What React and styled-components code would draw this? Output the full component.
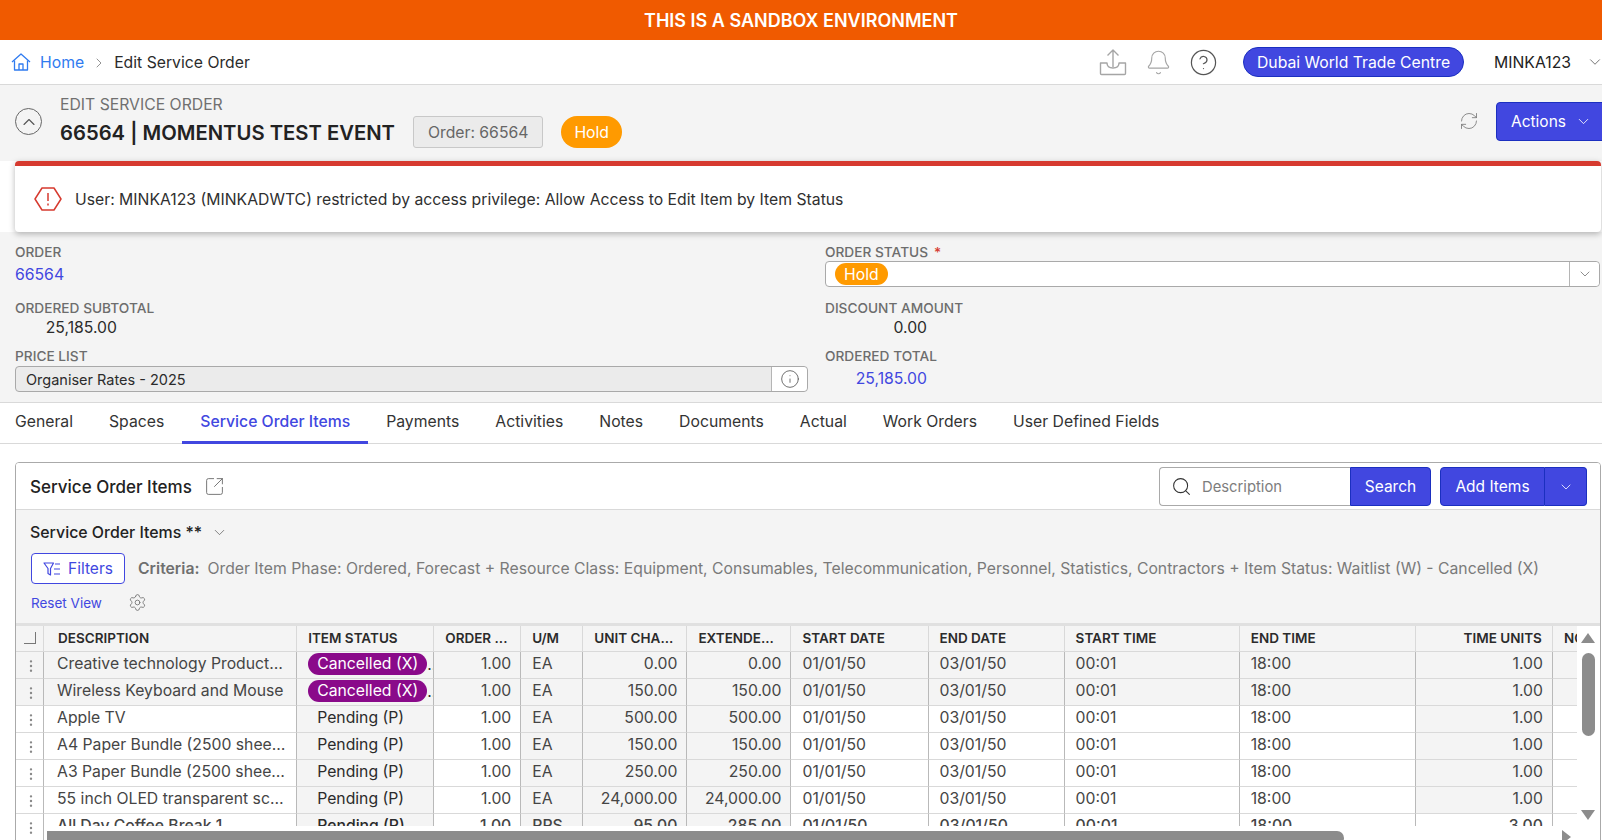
import styled, { createGlobalStyle } from "styled-components";
import {
    Bell,
    ChevronDown,
    ChevronRight,
    ChevronUp,
    CircleHelp,
    EllipsisVertical,
    Info,
    RefreshCw,
    Search,
    Settings,
    SquareArrowOutUpRight,
} from "lucide-react";

const BLUE = "#4147e0";
const BLUE_EDGE = "#1b2fc0";
const GREY_BG = "#f4f4f4";
const LINE = "#d9d9d9";
const BODY_FONT = "15.75px";

const GlobalStyle = createGlobalStyle`
    html, body {
        margin: 0;
        padding: 0;
        height: 840px;
        overflow: hidden;
        background: white;
    }
    body, input, button {
        font-family: Inter, "Liberation Sans", sans-serif;
        color: #2b2b2b;
    }
    * { box-sizing: border-box; }
`;

const Page = styled.div`
    width: 1602px;
    height: 840px;
    overflow: hidden;
`;

const Banner = styled.div`
    height: 40px;
    background: #f05a00;
    color: white;
    font-size: 18px;
    font-weight: 600;
    display: flex;
    align-items: center;
    justify-content: center;
`;

const TopBar = styled.header`
    height: 45px;
    background: white;
    border-bottom: 1px solid ${LINE};
    padding: 0 0 0 11px;
    display: flex;
    align-items: center;
    justify-content: space-between;
`;

const Crumbs = styled.nav`
    display: flex;
    align-items: center;
    font-size: ${BODY_FONT};
    color: #2b2b2b;
`;

const CrumbLink = styled.a`
    color: #2f7bf0;
    margin-left: 9px;
`;

const CrumbArrow = styled(ChevronRight)`
    margin: 1px 7px 0 7px;
    color: #777;
`;

const TopTools = styled.div`
    display: flex;
    align-items: center;
    margin-right: -2px;
`;

const ToolIcon = styled.span`
    display: flex;
    color: ${(p) => p.$color || "#a5a5a5"};
    margin-right: ${(p) => p.$gap}px;
`;

const VenuePill = styled.div`
    width: 221px;
    height: 30px;
    border-radius: 15px;
    background: ${BLUE};
    border: 1px solid ${BLUE_EDGE};
    color: white;
    font-size: ${BODY_FONT};
    display: flex;
    align-items: center;
    justify-content: center;
    margin-right: 30px;
`;

const UserName = styled.span`
    font-size: ${BODY_FONT};
    color: #222;
    margin-right: 15px;
`;

const PageHead = styled.section`
    height: 76px;
    background: ${GREY_BG};
    padding: 10px 0 0 15px;
    display: flex;
    justify-content: space-between;
`;

const HeadLeft = styled.div`
    display: flex;
    align-items: center;
    align-self: flex-start;
    gap: 18px;
`;

const CollapseBtn = styled.span`
    width: 27px;
    height: 27px;
    border: 1.3px solid #666;
    border-radius: 50%;
    color: #555;
    display: flex;
    align-items: center;
    justify-content: center;
`;

const HeadEyebrow = styled.div`
    font-size: ${BODY_FONT};
    line-height: 19px;
    color: #707070;
`;

const TitleRow = styled.div`
    display: flex;
    align-items: center;
    margin-top: 2px;
`;

const Title = styled.h1`
    margin: 0;
    font-size: 20.25px;
    font-weight: 600;
    color: #222;
    margin-right: 18px;
`;

const OrderChip = styled.span`
    height: 32px;
    padding: 0 14px;
    background: #ebebeb;
    border: 1px solid #c8c8c8;
    border-radius: 3px;
    color: #666;
    font-size: ${BODY_FONT};
    display: flex;
    align-items: center;
    margin-right: 18px;
`;

const HoldBadge = styled.span`
    background: #ff9a00;
    color: white;
    border-radius: 16px;
    display: inline-flex;
    align-items: center;
    justify-content: center;
    font-size: ${BODY_FONT};
    height: ${(p) => (p.$small ? "22px" : "32px")};
    padding: 0 ${(p) => (p.$small ? "9px" : "13px")};
`;

const HeadRight = styled.div`
    display: flex;
    align-items: flex-start;
    margin-right: -16px;
    padding-top: 7px;
`;

const RefreshIcon = styled(RefreshCw)`
    color: #777;
    margin: 9px 17px 0 0;
`;

const BlueButton = styled.button`
    height: ${(p) => p.$h || 39}px;
    background: ${BLUE};
    border: 1px solid ${BLUE_EDGE};
    border-radius: 4px;
    color: white;
    font-size: 15.5px;
    display: flex;
    align-items: center;
    padding: 0 14px;
`;

const ActionsButton = styled(BlueButton)`
    width: 122px;
    gap: 9px;
    padding-right: 0;
`;

const AlertBox = styled.div`
    position: relative;
    margin: 0 1px 0 15px;
    height: 71px;
    background: white;
    border-top: 5px solid #d63a2f;
    border-radius: 4px;
    box-shadow: 0 2px 6px rgba(0, 0, 0, 0.28);
    padding-left: 19px;
    display: flex;
    align-items: center;
    gap: 13px;
    font-size: ${BODY_FONT};
    color: #2f2f2f;
`;

const FieldGrid = styled.section`
    background: ${GREY_BG};
    height: 171px;
    padding: 12px 2px 0 15px;
    border-bottom: 1px solid ${LINE};
    display: grid;
    grid-template-columns: 793px 775px;
    column-gap: 17px;
    grid-template-rows: 56px 48px 44px;
`;

const Field = styled.div`
    display: flex;
    flex-direction: column;
    min-width: 0;
`;

const FieldLabel = styled.label`
    font-size: 13.7px;
    line-height: 16px;
    font-weight: 500;
    color: #6d6d6d;
    margin-bottom: 1px;
`;

const Required = styled.span`
    color: #d63a2f;
    margin-left: 6px;
`;

const LinkValue = styled.a`
    font-size: ${BODY_FONT};
    line-height: 28px;
    color: ${BLUE};
`;

const AmountValue = styled.div`
    width: 102px;
    text-align: right;
    font-size: ${BODY_FONT};
    line-height: 22px;
    color: ${(p) => (p.$link ? BLUE : "#2b2b2b")};
    margin-top: ${(p) => (p.$link ? "3px" : "0")};
`;

const SelectBox = styled.div`
    height: 26px;
    border: 1px solid #a9a9a9;
    border-radius: 4px;
    background: ${(p) => (p.$disabled ? "#ebebeb" : "white")};
    margin-top: ${(p) => (p.$disabled ? "1px" : "0")};
    display: flex;
    align-items: center;
    font-size: 14.5px;
`;

const SelectValue = styled.div`
    flex: 1;
    padding-left: ${(p) => p.$pad}px;
    display: flex;
    align-items: center;
`;

const SelectAddon = styled.span`
    width: ${(p) => p.$w}px;
    height: 100%;
    border-left: 1px solid #b5b5b5;
    background: white;
    border-radius: 0 4px 4px 0;
    color: #555;
    display: flex;
    align-items: center;
    justify-content: center;
`;

const Tabs = styled.nav`
    height: 41px;
    background: white;
    border-bottom: 1px solid ${LINE};
    padding-left: 15px;
    display: flex;
`;

const Tab = styled.a`
    padding: 0 18px 2px;
    font-size: ${BODY_FONT};
    display: flex;
    align-items: center;
    color: ${(p) => (p.$active ? BLUE : "#333")};
    font-weight: ${(p) => (p.$active ? 500 : 400)};
    border-bottom: 3px solid ${(p) => (p.$active ? BLUE : "transparent")};
    height: 41px;

    &:first-child {
        padding-left: 0;
    }
`;

const Panel = styled.section`
    margin: 18px 1px 0 15px;
    height: 379px;
    border: 1px solid #aaa;
    border-radius: 4px 4px 0 0;
    position: relative;
    overflow: hidden;
`;

const PanelHead = styled.div`
    height: 47px;
    background: white;
    border-bottom: 1px solid ${LINE};
    padding: 4px 13px 0 14px;
    display: flex;
    justify-content: space-between;
`;

const PanelTitle = styled.div`
    display: flex;
    align-items: center;
    gap: 12px;
    font-size: 17px;
    font-weight: 500;
    color: #222;
    height: 39px;
`;

const PanelTools = styled.div`
    display: flex;
    gap: 9px;
`;

const SearchGroup = styled.div`
    display: flex;
`;

const SearchBox = styled.div`
    width: 191px;
    height: 39px;
    background: white;
    border: 1px solid #a9a9a9;
    border-right: 0;
    border-radius: 4px 0 0 4px;
    padding-left: 11px;
    display: flex;
    align-items: center;
    gap: 10px;
    font-size: 14.8px;
    color: #7d7d7d;
`;

const SearchButton = styled(BlueButton)`
    border-radius: 0 4px 4px 0;
    width: 81px;
    justify-content: center;
    padding: 0;
`;

const SplitMain = styled(BlueButton)`
    width: 105px;
    border-radius: 4px 0 0 4px;
    justify-content: center;
    padding: 0;
    border-right: 1px solid ${BLUE_EDGE};
`;

const SplitCaret = styled(BlueButton)`
    width: 42px;
    border-radius: 0 4px 4px 0;
    border-left: 0;
    justify-content: center;
    padding: 0;
`;

const SplitGroup = styled.div`
    display: flex;
`;

const ViewArea = styled.div`
    height: 116px;
    background: ${GREY_BG};
    padding: 11px 14px 0 14px;
    border-bottom: 3px solid #e0e0e0;
`;

const ViewName = styled.div`
    display: flex;
    align-items: center;
    gap: 9px;
    height: 22px;
    font-size: 15.9px;
    font-weight: 500;
    color: #222;
`;

const FilterRow = styled.div`
    display: flex;
    align-items: center;
    margin-top: 10px;
    padding-left: 1px;
    white-space: nowrap;
    font-size: ${BODY_FONT};
    color: #7a7a7a;
`;

const FilterButton = styled.button`
    width: 94px;
    height: 31px;
    background: white;
    border: 1px solid ${BLUE};
    border-radius: 4px;
    color: ${BLUE};
    font-size: 15.5px;
    display: flex;
    align-items: center;
    justify-content: center;
    gap: 7px;
    margin-right: 13px;
`;

const CriteriaLabel = styled.b`
    font-weight: 600;
    color: #6f6f6f;
    margin-right: 8px;
`;

const ResetRow = styled.div`
    display: flex;
    align-items: center;
    gap: 26px;
    margin-top: 9px;
    padding-left: 1px;
    font-size: 13.5px;
    color: ${BLUE};
`;

const GearIcon = styled(Settings)`
    color: #666;
`;

const GridTable = styled.table`
    table-layout: fixed;
    width: 1597px;
    border-collapse: separate;
    border-spacing: 0;
    font-size: ${BODY_FONT};
`;

const HeadCell = styled.th`
    height: 26px;
    padding: 0 0 1px ${(p) => (p.$wide ? "14px" : "11px")};
    padding-right: ${(p) => (p.$right ? "10px" : "0")};
    background: ${GREY_BG};
    border-right: 1px solid ${LINE};
    border-bottom: 1px solid ${LINE};
    font-size: 13.5px;
    font-weight: 600;
    color: #2b2b2b;
    text-align: ${(p) => (p.$right ? "right" : "left")};
    white-space: nowrap;
    overflow: hidden;
`;

const Cell = styled.td`
    height: 27px;
    padding: 0 ${(p) => (p.$right ? "9px" : "10px")} 3px ${(p) => (p.$wide ? "13px" : "11px")};
    background: ${(p) => (p.$shade ? GREY_BG : "white")};
    border-right: 1px solid #b9b9b9;
    border-bottom: 1px solid ${LINE};
    color: ${(p) => (p.$status ? "#2b2b2b" : "#454545")};
    text-align: ${(p) => (p.$right ? "right" : "left")};
    white-space: nowrap;
    overflow: hidden;
    text-overflow: ellipsis;
    font-weight: ${(p) => (p.$bold ? 500 : 400)};
`;

const GripCell = styled(Cell)`
    padding: 0 0 0 2px;
    color: #888;
    text-align: center;

    svg {
        display: inline-block;
        vertical-align: middle;
    }
`;

const StatusPill = styled.span`
    display: inline-flex;
    align-items: center;
    height: 22px;
    padding: 0 9px;
    border-radius: 11px;
    background: ${(p) => (p.$cancelled ? "#8a0a8a" : "transparent")};
    color: ${(p) => (p.$cancelled ? "white" : "#2b2b2b")};
`;

const CornerMark = styled.span`
    display: block;
    width: 12px;
    height: 12px;
    margin: -1px 0 0 -3px;
    border-right: 1.5px solid #777;
    border-bottom: 1.5px solid #777;
`;

const VScroll = styled.div`
    position: absolute;
    top: 163px;
    right: 0;
    bottom: 0;
    width: 23px;
    background: white;
`;

const VThumb = styled.div`
    position: absolute;
    top: 27px;
    left: 5px;
    width: 13px;
    height: 83px;
    border-radius: 7px;
    background: #8c8c8c;
`;

const Arrow = styled.span`
    position: absolute;
    width: 0;
    height: 0;
    border-style: solid;
    border-color: transparent;
`;

const ArrowUp = styled(Arrow)`
    top: 7px;
    left: 4px;
    border-width: 0 7.5px 10px;
    border-bottom-color: #8c8c8c;
`;

const ArrowDown = styled(Arrow)`
    top: 184px;
    left: 4px;
    border-width: 10px 7.5px 0;
    border-top-color: #8c8c8c;
`;

const HScroll = styled.div`
    position: absolute;
    left: 28px;
    right: 23px;
    bottom: 0;
    height: 14px;
    background: white;
`;

const HThumb = styled.div`
    position: absolute;
    left: 3px;
    top: 5px;
    width: 1297px;
    height: 14px;
    border-radius: 0 7px 7px 0;
    background: #8c8c8c;
`;

const ArrowRight = styled(Arrow)`
    top: 4px;
    left: 1518px;
    border-width: 7.5px 0 7.5px 9px;
    border-left-color: #8c8c8c;
`;

const columns = [
    { label: "DESCRIPTION", width: 253, wide: true },
    { label: "ITEM STATUS", width: 137, shade: true },
    { label: "ORDER ...", width: 87, cellRight: true },
    { label: "U/M", width: 62, shade: true },
    { label: "UNIT CHA...", width: 104, cellRight: true, shade: true },
    { label: "EXTENDE...", width: 104, cellRight: true, shade: true },
    { label: "START DATE", width: 137 },
    { label: "END DATE", width: 136 },
    { label: "START TIME", width: 175 },
    { label: "END TIME", width: 176 },
    { label: "TIME UNITS", width: 137, right: true, cellRight: true, shade: true },
    { label: "NOTES", width: 60 },
];

const row = (desc, status, um, unit, ext, units = "1.00", extra = {}) => ({
    cells: [desc, status, "1.00", um, unit, ext, "01/01/50", "03/01/50", "00:01", "18:00", units, ""],
    ...extra,
});

const rows = [
    row("Creative technology Production Services", "Cancelled (X)", "EA", "0.00", "0.00", "1.00", { cancelled: true }),
    row("Wireless Keyboard and Mouse", "Cancelled (X)", "EA", "150.00", "150.00", "1.00", { cancelled: true }),
    row("Apple TV", "Pending (P)", "EA", "500.00", "500.00"),
    row("A4 Paper Bundle (2500 sheets) Pack", "Pending (P)", "EA", "150.00", "150.00"),
    row("A3 Paper Bundle (2500 sheets) Pack", "Pending (P)", "EA", "250.00", "250.00"),
    row("55 inch OLED transparent screen", "Pending (P)", "EA", "24,000.00", "24,000.00"),
    row("All Day Coffee Break 1", "Pending (P)", "PPS", "95.00", "285.00", "3.00", { bold: true }),
];

const tabs = ["General", "Spaces", "Service Order Items", "Payments", "Activities", "Notes", "Documents", "Actual", "Work Orders", "User Defined Fields"];

const HomeIcon = () => (
    <svg width="20" height="20" viewBox="0 0 20 20" fill="none" stroke="#2f7bf0" strokeWidth="1.3" strokeLinejoin="round">
        <path d="M1 10 10 2l9 8" />
        <path d="M3.5 8.5V18h13V8.5" />
        <path d="M8 18v-6h4v6" />
    </svg>
);

const UploadIcon = () => (
    <svg width="28" height="28" viewBox="0 0 28 28" fill="none" stroke="#a5a5a5" strokeWidth="1.4" strokeLinejoin="round">
        <path d="M14 19V2M8.5 7.5 14 2l5.5 5.5" />
        <path d="M8 15H1.5v10.5a1 1 0 0 0 1 1h23a1 1 0 0 0 1-1V15H20c0 3-2 5-6 5s-6-2-6-5Z" />
    </svg>
);

const HexAlert = () => (
    <svg width="28" height="24" viewBox="0 0 28 24" fill="none" stroke="#d63a2f" strokeWidth="1.5" strokeLinejoin="round">
        <path d="M8 1h12l7 11-7 11H8L1 12Z" />
        <path d="M14 6v8M14 16.5v2" />
    </svg>
);

const FilterIcon = () => (
    <svg width="18" height="16" viewBox="0 0 18 16" fill="none" stroke={BLUE} strokeWidth="1.2" strokeLinejoin="round">
        <path d="M1 2h9.5L7.5 7.5V14l-2.5-1.5v-5Z" />
        <path d="M12 3h5M11 8h6M11 13h6" />
    </svg>
);

export default function App() {
    return (
        <Page>
            <GlobalStyle />
            <Banner>THIS IS A SANDBOX ENVIRONMENT</Banner>
            <TopBar>
                <Crumbs>
                    <HomeIcon />
                    <CrumbLink>Home</CrumbLink>
                    <CrumbArrow size={16} strokeWidth={1.2} />
                    Edit Service Order
                </Crumbs>
                <TopTools>
                    <ToolIcon $gap={18}><UploadIcon /></ToolIcon>
                    <ToolIcon $gap={17}><Bell size={27} strokeWidth={1} /></ToolIcon>
                    <ToolIcon $gap={25} $color="#555"><CircleHelp size={29} strokeWidth={1} /></ToolIcon>
                    <VenuePill>Dubai World Trade Centre</VenuePill>
                    <UserName>MINKA123</UserName>
                    <ChevronDown size={18} strokeWidth={1.2} color="#666" />
                </TopTools>
            </TopBar>
            <PageHead>
                <HeadLeft>
                    <CollapseBtn><ChevronUp size={20} strokeWidth={1.3} /></CollapseBtn>
                    <div>
                        <HeadEyebrow>EDIT SERVICE ORDER</HeadEyebrow>
                        <TitleRow>
                            <Title>66564 | MOMENTUS TEST EVENT</Title>
                            <OrderChip>Order: 66564</OrderChip>
                            <HoldBadge>Hold</HoldBadge>
                        </TitleRow>
                    </div>
                </HeadLeft>
                <HeadRight>
                    <RefreshIcon size={20} strokeWidth={1} />
                    <ActionsButton>Actions <ChevronDown size={17} strokeWidth={1.2} /></ActionsButton>
                </HeadRight>
            </PageHead>
            <AlertBox>
                <HexAlert />
                User: MINKA123 (MINKADWTC) restricted by access privilege: Allow Access to Edit Item by Item Status
            </AlertBox>
            <FieldGrid>
                <Field>
                    <FieldLabel>ORDER</FieldLabel>
                    <LinkValue>66564</LinkValue>
                </Field>
                <Field>
                    <FieldLabel>ORDER STATUS<Required>*</Required></FieldLabel>
                    <SelectBox>
                        <SelectValue $pad={9}><HoldBadge $small>Hold</HoldBadge></SelectValue>
                        <SelectAddon $w={30}><ChevronDown size={16} strokeWidth={1} /></SelectAddon>
                    </SelectBox>
                </Field>
                <Field>
                    <FieldLabel>ORDERED SUBTOTAL</FieldLabel>
                    <AmountValue>25,185.00</AmountValue>
                </Field>
                <Field>
                    <FieldLabel>DISCOUNT AMOUNT</FieldLabel>
                    <AmountValue>0.00</AmountValue>
                </Field>
                <Field>
                    <FieldLabel>PRICE LIST</FieldLabel>
                    <SelectBox $disabled>
                        <SelectValue $pad={10}>Organiser Rates - 2025</SelectValue>
                        <SelectAddon $w={36}><Info size={20} strokeWidth={1} /></SelectAddon>
                    </SelectBox>
                </Field>
                <Field>
                    <FieldLabel>ORDERED TOTAL</FieldLabel>
                    <AmountValue $link>25,185.00</AmountValue>
                </Field>
            </FieldGrid>
            <Tabs>
                {tabs.map((t) => (
                    <Tab key={t} $active={t === "Service Order Items"}>{t}</Tab>
                ))}
            </Tabs>
            <Panel>
                <PanelHead>
                    <PanelTitle>
                        Service Order Items
                        <SquareArrowOutUpRight size={21} strokeWidth={1} color="#666" />
                    </PanelTitle>
                    <PanelTools>
                        <SearchGroup>
                            <SearchBox><Search size={21} strokeWidth={1.2} color="#333" />Description</SearchBox>
                            <SearchButton>Search</SearchButton>
                        </SearchGroup>
                        <SplitGroup>
                            <SplitMain>Add Items</SplitMain>
                            <SplitCaret><ChevronDown size={16} strokeWidth={1.2} /></SplitCaret>
                        </SplitGroup>
                    </PanelTools>
                </PanelHead>
                <ViewArea>
                    <ViewName>Service Order Items ** <ChevronDown size={17} strokeWidth={1} color="#555" /></ViewName>
                    <FilterRow>
                        <FilterButton><FilterIcon />Filters</FilterButton>
                        <CriteriaLabel>Criteria:</CriteriaLabel>
                        Order Item Phase: Ordered, Forecast + Resource Class: Equipment, Consumables, Telecommunication, Personnel, Statistics, Contractors + Item Status: Waitlist (W) - Cancelled (X)
                    </FilterRow>
                    <ResetRow>
                        Reset View
                        <GearIcon size={19} strokeWidth={1} />
                    </ResetRow>
                </ViewArea>
                <GridTable>
                    <colgroup>
                        <col style={{ width: 28 }} />
                        {columns.map((c) => <col key={c.label} style={{ width: c.width }} />)}
                    </colgroup>
                    <thead>
                        <tr>
                            <HeadCell><CornerMark /></HeadCell>
                            {columns.map((c) => (
                                <HeadCell key={c.label} $right={c.right} $wide={c.wide}>{c.label}</HeadCell>
                            ))}
                        </tr>
                    </thead>
                    <tbody>
                        {rows.map((r, i) => (
                            <tr key={i}>
                                <GripCell $shade={r.cancelled}><EllipsisVertical size={16} strokeWidth={1.6} /></GripCell>
                                {r.cells.map((value, j) => {
                                    const c = columns[j];
                                    const shade = r.cancelled || (c.shade && !(r.bold && c.label === "TIME UNITS"));
                                    return (
                                        <Cell key={c.label} $right={c.cellRight} $wide={c.wide} $shade={shade} $bold={r.bold} $status={j === 1}>
                                            {j === 1 ? <StatusPill $cancelled={r.cancelled}>{value}</StatusPill> : value}
                                        </Cell>
                                    );
                                })}
                            </tr>
                        ))}
                    </tbody>
                </GridTable>
                <VScroll>
                    <ArrowUp />
                    <VThumb />
                    <ArrowDown />
                </VScroll>
                <HScroll>
                    <HThumb />
                    <ArrowRight />
                </HScroll>
            </Panel>
        </Page>
    );
}
